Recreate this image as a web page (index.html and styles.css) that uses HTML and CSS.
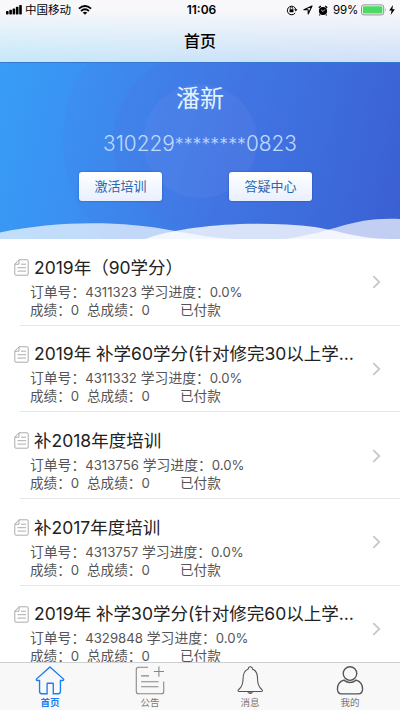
FILE: index.html
```html
<!DOCTYPE html>
<html lang="zh-CN">
<head>
    <meta charset="UTF-8">
    <meta name="viewport" content="width=device-width, initial-scale=1.0">
    <title>首页</title>
    <link rel="stylesheet" href="styles.css">
</head>
<body>
    <header class="header">
        <div class="status-bar">
            <div class="status-left">
                <svg class="signal" width="16" height="10" viewBox="0 0 16 10">
                    <rect x="0" y="6" width="2.6" height="3.4" rx="0.7"/>
                    <rect x="3.3" y="4.8" width="2.6" height="4.6" rx="0.7"/>
                    <rect x="6.6" y="3.4" width="2.6" height="6" rx="0.7"/>
                    <rect x="9.9" y="1.7" width="2.6" height="7.7" rx="0.7"/>
                    <rect x="13.2" y="0" width="2.6" height="9.4" rx="0.7"/>
                </svg>
                <span class="carrier">中国移动</span>
                <svg class="wifi" width="14" height="10" viewBox="0 0 14 10">
                    <path d="M0.9 3.6Q7 -1.6 13.1 3.6M3 6Q7 2.6 11 6" fill="none" stroke="#000" stroke-width="1.8"/>
                    <path d="M4.7 7.5Q7 5.8 9.3 7.5L7 9.8Z"/>
                </svg>
            </div>
            <span class="time">11:06</span>
            <div class="status-right">
                <svg width="12" height="12" viewBox="0 0 12 12">
                    <path d="M9.2 8.9A4.3 4.3 0 1 1 9.8 5.4" fill="none" stroke="#000"/>
                    <path d="M8.1 5.2h3.4L9.8 7.5z"/>
                    <rect x="3.5" y="5.2" width="4" height="3" rx="0.4"/>
                    <path d="M4.3 5.4V4.3a1.2 1.2 0 0 1 2.4 0v1.1" fill="none" stroke="#000" stroke-width="0.8"/>
                </svg>
                <svg width="10" height="10" viewBox="0 0 10 10">
                    <path d="M0.9 4.8L9 0.9L5.2 9V4.8z" fill="none" stroke="#000" stroke-width="1.1" stroke-linejoin="round"/>
                </svg>
                <svg width="10" height="11" viewBox="0 0 10 11">
                    <circle cx="5" cy="6" r="4.1"/>
                    <path d="M0.8 2.8L2.8 1.1M9.2 2.8L7.2 1.1M2 9.6L1.3 10.4M8 9.6L8.7 10.4" stroke="#000" stroke-width="1.3"/>
                    <path d="M3.1 4.8L5 6.5L7 4.4" fill="none" stroke="#f7f7f9" stroke-width="0.8"/>
                </svg>
                <span class="percent">99%</span>
                <svg class="battery" width="26" height="12" viewBox="0 0 26 12">
                    <rect x="0.5" y="0.9" width="22.2" height="10" rx="2.3" fill="#fff" stroke="#8b8e92"/>
                    <rect x="1.8" y="2.2" width="19.6" height="7.4" rx="1.2" fill="#4cd964"/>
                    <path d="M24 4.3q1.4 1.6 0 3.2z" fill="#8b8e92"/>
                </svg>
                <svg class="bolt" width="6" height="10" viewBox="0 0 6 10">
                    <path d="M4 0L0.2 5.4H2.6L1.7 10L5.9 4.2H3.4z"/>
                </svg>
            </div>
        </div>
        <h1 class="page-title">首页</h1>
    </header>

    <section class="hero">
        <svg class="hero-bg" width="400" height="177" viewBox="0 0 400 177">
            <circle class="ring ring-outer" cx="200" cy="79" r="137"/>
            <circle class="ring ring-middle" cx="200" cy="79" r="87"/>
            <circle class="ring ring-inner" cx="200" cy="79" r="57"/>
            <path class="wave wave-side" d="M0 170.5C55 159 120 158 175 169C198 173 212 176 235 177H0z"/>
            <path class="wave wave-side" d="M285 177C340 169 350 155 400 157V177z"/>
            <path class="wave wave-center" d="M145 177C185 163 255 158 315 165C345 170 355 176 390 177z"/>
        </svg>
        <div class="hero-content">
            <div class="user-name">潘新</div>
            <div class="user-id">310229<span class="mask">********</span>0823</div>
            <div class="hero-buttons">
                <button class="hero-button">激活培训</button>
                <button class="hero-button">答疑中心</button>
            </div>
        </div>
    </section>

    <svg class="symbols" width="0" height="0">
        <symbol id="doc" viewBox="0 0 15 17">
            <path d="M5 0.8H13.2Q14.2 0.8 14.2 1.8V15.2Q14.2 16.2 13.2 16.2H1.8Q0.8 16.2 0.8 15.2V5.2L5 0.8V5.2H0.8M7 5.2H12M3.5 8.7H12M3.5 12.1H12" fill="none" stroke="#a3a3a3" stroke-width="0.9"/>
        </symbol>
        <symbol id="chevron" viewBox="0 0 9 14">
            <path d="M1.3 1.2L7.3 7L1.3 12.8" fill="none" stroke="#c7c7cc" stroke-width="1.8"/>
        </symbol>
    </svg>

    <main class="orders">
        <article class="order">
            <div class="order-body">
                <h2 class="order-title"><svg class="doc-icon"><use href="#doc"/></svg><span>2019年（90学分）</span></h2>
                <p class="order-line">订单号：<span class="num">4311323</span> 学习进度：<span class="num">0.0%</span></p>
                <p class="order-line scores"><span class="score">成绩：<span class="num">0</span></span><span class="total">总成绩：<span class="num">0</span></span><span>已付款</span></p>
            </div>
            <svg class="chevron"><use href="#chevron"/></svg>
        </article>
        <article class="order">
            <div class="order-body">
                <h2 class="order-title"><svg class="doc-icon"><use href="#doc"/></svg><span>2019年 补学60学分(针对修完30以上学…</span></h2>
                <p class="order-line">订单号：<span class="num">4311332</span> 学习进度：<span class="num">0.0%</span></p>
                <p class="order-line scores"><span class="score">成绩：<span class="num">0</span></span><span class="total">总成绩：<span class="num">0</span></span><span>已付款</span></p>
            </div>
            <svg class="chevron"><use href="#chevron"/></svg>
        </article>
        <article class="order">
            <div class="order-body">
                <h2 class="order-title"><svg class="doc-icon"><use href="#doc"/></svg><span>补2018年度培训</span></h2>
                <p class="order-line">订单号：<span class="num">4313756</span> 学习进度：<span class="num">0.0%</span></p>
                <p class="order-line scores"><span class="score">成绩：<span class="num">0</span></span><span class="total">总成绩：<span class="num">0</span></span><span>已付款</span></p>
            </div>
            <svg class="chevron"><use href="#chevron"/></svg>
        </article>
        <article class="order">
            <div class="order-body">
                <h2 class="order-title"><svg class="doc-icon"><use href="#doc"/></svg><span>补2017年度培训</span></h2>
                <p class="order-line">订单号：<span class="num">4313757</span> 学习进度：<span class="num">0.0%</span></p>
                <p class="order-line scores"><span class="score">成绩：<span class="num">0</span></span><span class="total">总成绩：<span class="num">0</span></span><span>已付款</span></p>
            </div>
            <svg class="chevron"><use href="#chevron"/></svg>
        </article>
        <article class="order">
            <div class="order-body">
                <h2 class="order-title"><svg class="doc-icon"><use href="#doc"/></svg><span>2019年 补学30学分(针对修完60以上学…</span></h2>
                <p class="order-line">订单号：<span class="num">4329848</span> 学习进度：<span class="num">0.0%</span></p>
                <p class="order-line scores"><span class="score">成绩：<span class="num">0</span></span><span class="total">总成绩：<span class="num">0</span></span><span>已付款</span></p>
            </div>
            <svg class="chevron"><use href="#chevron"/></svg>
        </article>
    </main>

    <nav class="tabbar">
        <a class="tab active">
            <svg width="30" height="30" viewBox="0 0 30 30">
                <path d="M15 1L29 13.5Q29.6 15 28 15H25.8V26.5Q25.8 28.7 23.6 28.7H18.4V18.4Q18.4 17.8 17.8 17.8H12.6Q12 17.8 12 18.4V28.7H6.4Q4.2 28.7 4.2 26.5V15H2Q0.4 15 1 13.5z"/>
            </svg>
            <span>首页</span>
        </a>
        <a class="tab">
            <svg width="30" height="30" viewBox="0 0 30 30">
                <path d="M13 1.2H3.2Q0.8 1.2 0.8 3.6V26.4Q0.8 28.8 3.2 28.8H26.8Q29.2 28.8 29.2 26.4V16M24.2 0.5V11M19 5.7H29.5M5.8 10.2H14M5.8 16.2H23.8M5.8 21.5H23.8"/>
            </svg>
            <span>公告</span>
        </a>
        <a class="tab">
            <svg class="dark" width="30" height="30" viewBox="0 0 30 30">
                <path d="M13.2 3Q13.2 0.8 15.3 0.8T17.4 3C22 4.6 22.8 8.5 22.8 13.5C22.8 19.5 24.3 22 27.2 24.3Q29 26.3 26.5 26.3H4Q1.5 26.3 3.4 24.3C6.3 22 7.8 19.5 7.8 13.5C7.8 8.5 8.6 4.6 13.2 3z"/>
                <path class="clapper" d="M12 27.2H18.6Q15.3 30.5 12 27.2z"/>
            </svg>
            <span>消息</span>
        </a>
        <a class="tab">
            <svg class="person dark" width="30" height="30" viewBox="0 0 30 30">
                <circle cx="15" cy="7.8" r="7"/>
                <path d="M8.7 14.6C4 16 2 19.5 2 23.8C2 27.3 3.5 28.8 6.5 28.8H23.5C26.5 28.8 28 27.3 28 23.8C28 19.5 26 16 21.3 14.6Q15 19.5 8.7 14.6z"/>
            </svg>
            <span>我的</span>
        </a>
    </nav>
</body>
</html>
```
FILE: styles.css
```css
* {
    box-sizing: border-box;
}

body {
    margin: 0;
    width: 400px;
    height: 710px;
    overflow: hidden;
    display: flex;
    flex-direction: column;
    background: #fff;
    font-family: Inter, "Noto Sans CJK SC", sans-serif;
}

.header {
    height: 62px;
    flex: none;
    background: linear-gradient(to bottom, #f8f8fa 15%, rgba(248, 248, 250, 0) 115%), linear-gradient(to right, #bce5f8, #c9daf9);
}

.status-bar {
    height: 20px;
    display: grid;
    grid-template-columns: 1fr auto 1fr;
    align-items: center;
    padding: 0 5px 0 6px;
    font-size: 11.5px;
    line-height: 20px;
}

.status-left,
.status-right {
    display: flex;
    align-items: center;
}

.carrier {
    margin: 0 7px 0 3px;
}

.time {
    font-weight: 600;
    font-size: 12px;
    padding-left: 2px;
}

.status-right {
    justify-content: flex-end;
    gap: 5px;
}

.percent {
    letter-spacing: -0.2px;
}

.battery {
    margin-left: -2px;
}

.bolt {
    margin-left: -3px;
}

.page-title {
    margin: 0;
    text-align: center;
    font-size: 16px;
    font-weight: 500;
    line-height: 42px;
}

.hero {
    position: relative;
    height: 177px;
    flex: none;
    background: linear-gradient(103deg, #389df7 0%, #3b8df0 28%, #3e77e3 58%, #3b5fd3 100%);
    border-top: 1px solid #3479cf;
}

.hero-bg {
    position: absolute;
    top: -1px;
    left: 0;
}

.ring-outer {
    fill: rgba(75, 110, 225, 0.1);
}

.ring-middle {
    fill: rgba(75, 110, 225, 0.18);
}

.ring-inner {
    fill: rgba(140, 160, 240, 0.12);
}

.wave {
    fill: #fff;
}

.wave-side {
    opacity: 0.69;
}

.wave-center {
    opacity: 0.8;
}

.hero-content {
    position: relative;
    display: flex;
    flex-direction: column;
    align-items: center;
}

.user-name {
    margin-top: 17px;
    font-size: 24px;
    line-height: 38px;
    color: #e2f3ff;
}

.user-id {
    display: flex;
    margin-top: 11px;
    font-size: 20.8px;
    font-weight: 300;
    line-height: 30px;
    color: #c2dafb;
}

.mask {
    font-size: 17.8px;
}

.hero-buttons {
    display: flex;
    gap: 67px;
    margin-top: 13px;
    padding-right: 9px;
}

.hero-button {
    width: 83px;
    height: 29px;
    padding: 0 0 1px;
    border: none;
    border-radius: 3px;
    background: linear-gradient(#fff, #e8effd);
    box-shadow: 0 0 2px rgba(20, 60, 150, 0.7);
    font: 13px/28px "Noto Sans CJK SC", sans-serif;
    color: #2867b2;
}

.symbols {
    position: absolute;
}

.orders {
    flex: 1;
    min-height: 0;
    overflow: hidden;
}

.order {
    height: 86.7px;
    display: flex;
    align-items: center;
    justify-content: space-between;
    padding: 0 19px 0 14px;
    background: linear-gradient(#e6e6e6, #e6e6e6) 20px 100% / 380px 1px no-repeat;
}

.order-body {
    padding-top: 8.5px;
}

.order-title {
    display: flex;
    align-items: center;
    gap: 5px;
    margin: 0 0 2px;
    height: 26px;
    font-size: 17.5px;
    font-weight: 400;
    line-height: 26px;
    color: #222;
    white-space: nowrap;
}

.doc-icon {
    width: 15px;
    height: 17px;
}

.order-line {
    margin: 0 0 0 16px;
    font-size: 13.8px;
    line-height: 18px;
    height: 18px;
    color: #555;
    white-space: nowrap;
}

.num {
    font-size: 13.2px;
}

.scores {
    display: flex;
    font-size: 13.6px;
}

.score {
    width: 57px;
}

.total {
    width: 93px;
}

.chevron {
    width: 9px;
    height: 14px;
    flex: none;
}

.tabbar {
    display: flex;
    flex: none;
    height: 48px;
    background: #f8f8f8;
    border-top: 1px solid #cfcfcf;
}

.tab {
    flex: 1;
    display: flex;
    flex-direction: column;
    align-items: center;
    padding-top: 3px;
    font-size: 9.5px;
    line-height: 15px;
    color: #777;
}

.tab svg {
    fill: none;
    stroke: #858585;
    stroke-width: 1.1;
}

.tab svg.dark {
    stroke: #555;
}

.tab svg.person {
    stroke-width: 1.4;
}

.tab .clapper {
    fill: #555;
    stroke: none;
}

.tab.active {
    color: #1a7df0;
    font-weight: 700;
}

.tab.active svg {
    stroke: #1a7df0;
    stroke-width: 1.4;
}
```
